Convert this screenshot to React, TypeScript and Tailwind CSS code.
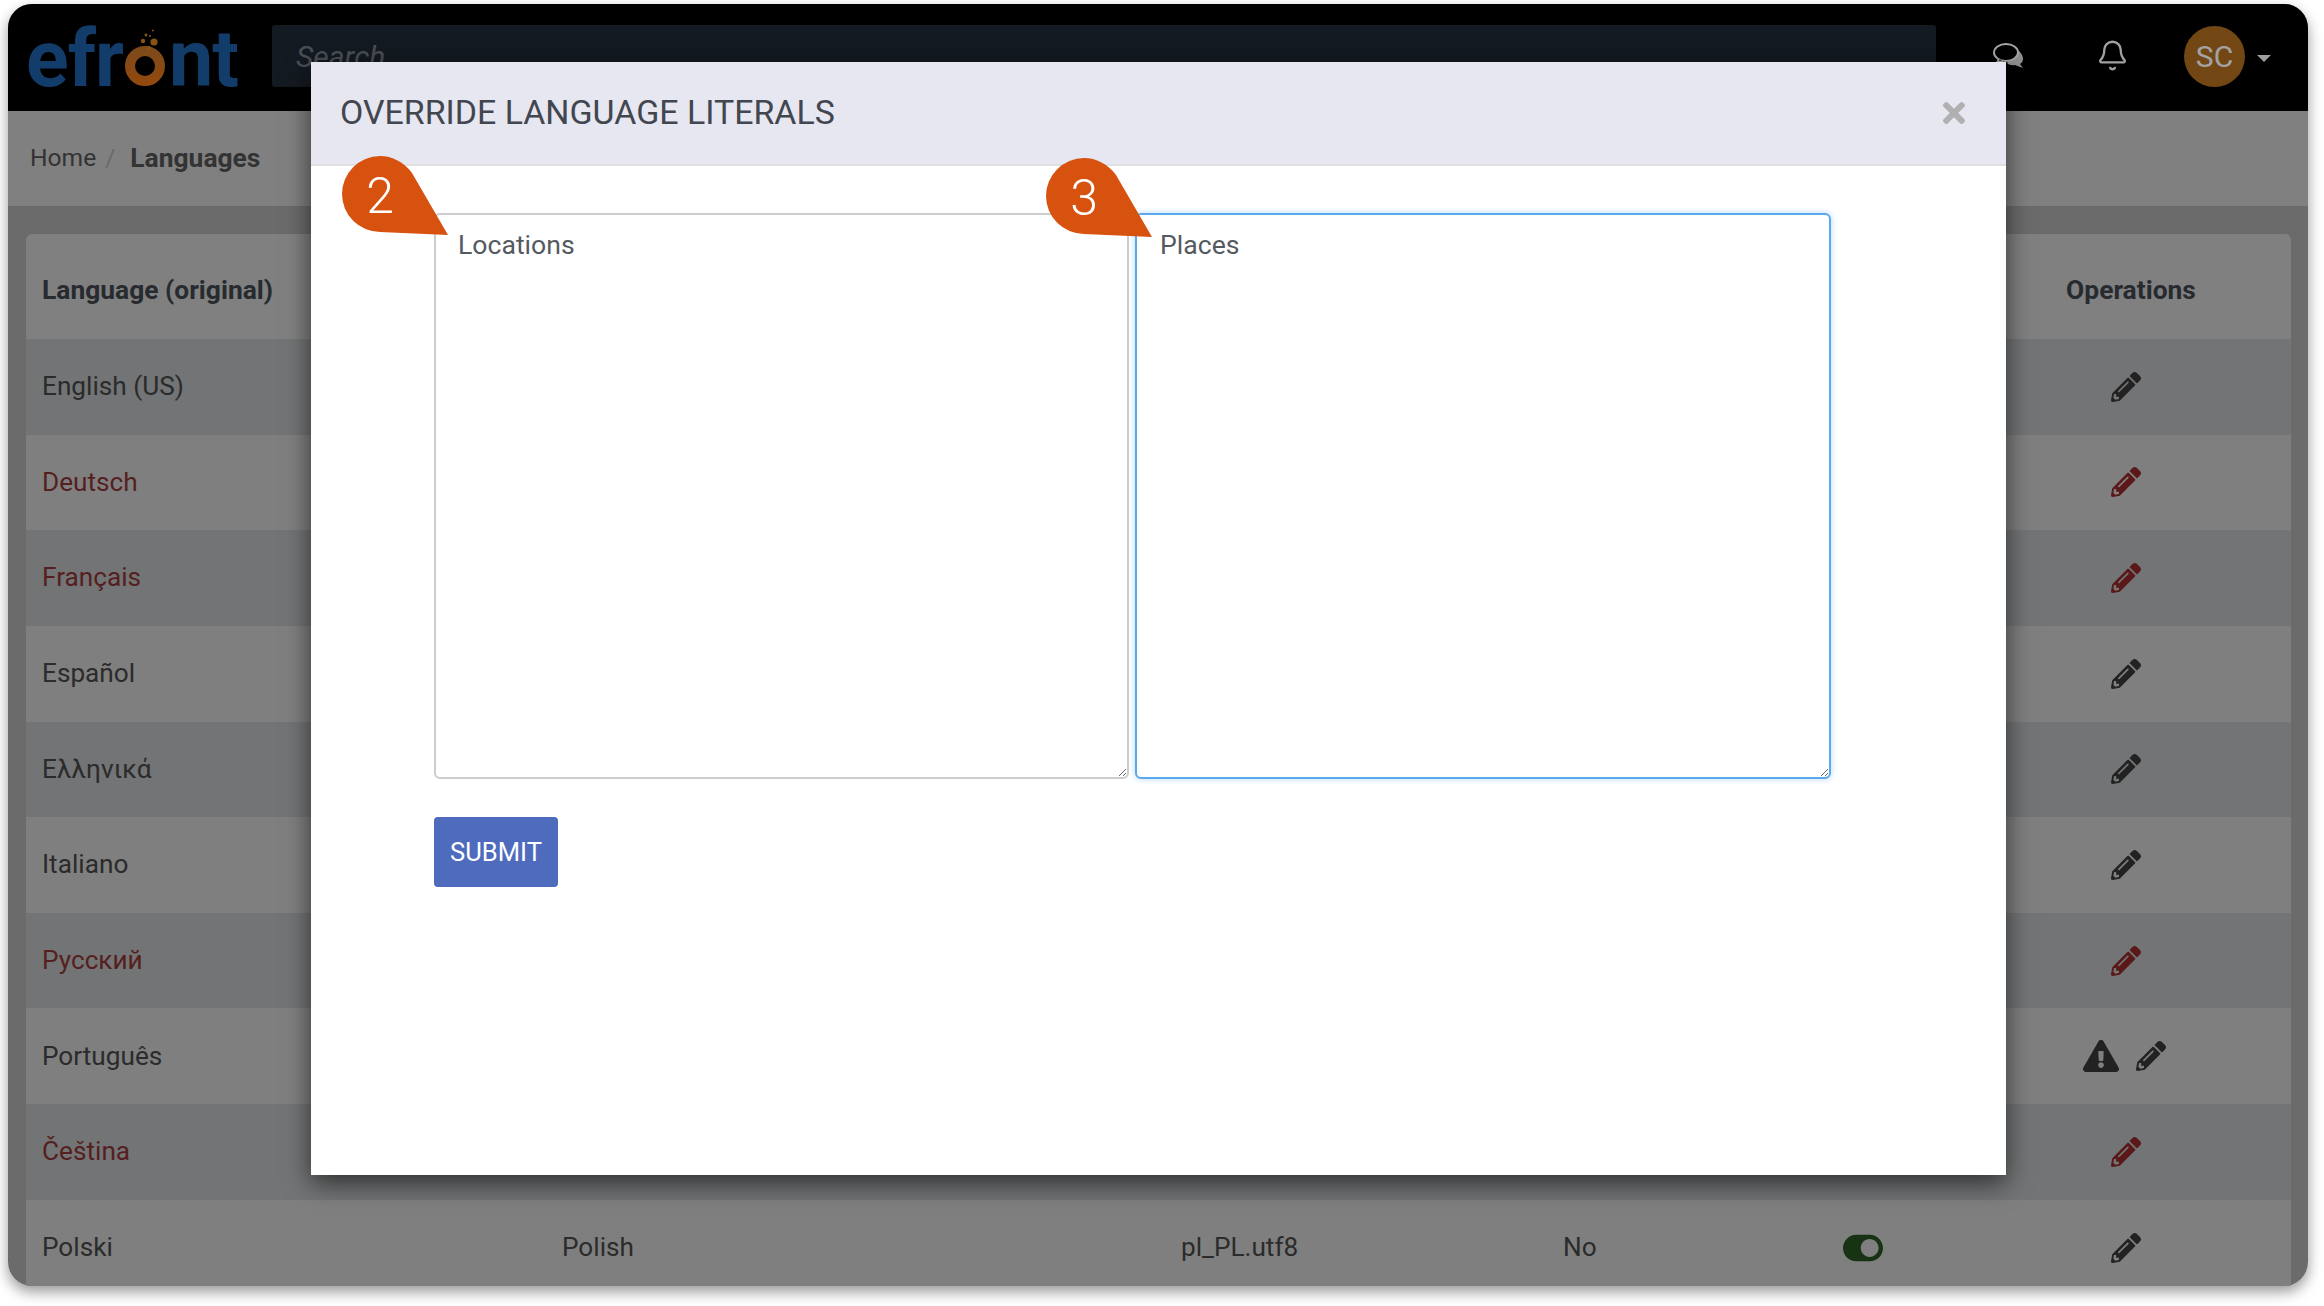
import React from "react";
import { FaPencilAlt, FaExclamationTriangle, FaTimes, FaToggleOn } from "react-icons/fa";
import { Bell } from "lucide-react";

const rows: { name: string; red?: boolean; warn?: boolean }[] = [
  { name: "English (US)" },
  { name: "Deutsch", red: true },
  { name: "Français", red: true },
  { name: "Español" },
  { name: "Ελληνικά" },
  { name: "Italiano" },
  { name: "Русский", red: true },
  { name: "Português", warn: true },
  { name: "Čeština", red: true },
  { name: "Polski" },
];

function Logo() {
  return (
    <div className="flex items-end text-[#123d6b] text-[79px] font-bold tracking-[-1px] w-[214px] h-[60px]">
      <span className="leading-[60px]">efr</span>
      <svg width="46" height="60" viewBox="0 0 46 60" className="shrink-0">
        <defs>
          <linearGradient id="o" x1="0" y1="0" x2="0" y2="1">
            <stop offset="0" stopColor="#7f4a1a" />
            <stop offset="1" stopColor="#91490f" />
          </linearGradient>
        </defs>
        <circle cx="22" cy="37" r="15" fill="none" stroke="url(#o)" strokeWidth="10" />
        <circle cx="31" cy="13" r="3.6" fill="#8a5316" />
        <circle cx="20" cy="12" r="2.2" fill="#8a5316" />
        <circle cx="23" cy="6" r="1.4" fill="#8a5316" />
        <circle cx="27" cy="7" r="1.1" fill="#8a5316" />
        <circle cx="30" cy="1.5" r="1" fill="#8a5316" />
        <circle cx="26" cy="19" r="2" fill="#8a5316" />
      </svg>
      <span className="leading-[60px]">nt</span>
    </div>
  );
}

function Chat() {
  return (
    <svg width="32" height="26" viewBox="0 0 32 26" fill="none">
      <path d="M23 6c4 2 7 6 7 10 0 2-1 4-3 5l3 4-8-3c-3 .5-6 0-8-2z" fill="#8f8f8f" />
      <ellipse cx="13" cy="9.5" rx="12" ry="8.5" stroke="#a6a6a6" strokeWidth="2" fill="#000" />
      <path d="M6 16l-2 4 6-2" stroke="#a6a6a6" strokeWidth="2" fill="#000" />
    </svg>
  );
}

function Callout({ n, className }: { n: string; className: string }) {
  return (
    <div className={`absolute w-[106px] h-[79px] ${className}`}>
      <svg width="106" height="79" viewBox="0 0 106 79" className="absolute left-0 top-0">
        <path d="M38 0C50 0 62 6 70 17L106 79 38 76A38 38 0 1 1 38 0Z" fill="#d7520f" />
      </svg>
      <span className="absolute left-0 top-[2px] w-[76px] h-[76px] flex items-center justify-center text-white text-[50px] font-light leading-none">
        {n}
      </span>
    </div>
  );
}

export default function App() {
  return (
    <div className="w-[2324px] h-[1306px] bg-white pt-[4px] px-[8px] overflow-hidden font-['Roboto',sans-serif]">
      <div className="relative w-[2300px] h-[1282px] rounded-[24px] shadow-[0_6px_14px_rgba(0,0,0,0.4)]">
        <div className="w-full h-full rounded-[24px] overflow-hidden flex flex-col bg-[#6b6b6b]">
          <header className="h-[107px] bg-black flex items-center shrink-0">
            <div className="ml-[18px] mt-[2px]">
              <Logo />
            </div>
            <div className="ml-[32px] w-[1664px] h-[62px] mt-[-3px] bg-[#141a21] rounded-[3px] pl-[24px] flex items-center">
              <span className="italic text-[30px] text-[#4a4f55]">Search</span>
            </div>
            <div className="ml-[57px] mt-[-3px]">
              <Chat />
            </div>
            <Bell className="ml-[71px] mt-[-5px] text-[#a0a0a0]" size={33} strokeWidth={1.7} />
            <div className="ml-[55px] w-[61px] h-[61px] rounded-full bg-[#734714] text-[#a3a3a3] text-[30px] flex items-center justify-center mt-[-2px]">
              SC
            </div>
            <div className="ml-[12px] w-0 h-0 border-x-[7px] border-x-transparent border-t-[7px] border-t-[#a0a0a0] mt-[1px]" />
          </header>

          <nav className="h-[95px] bg-[#808080] flex items-center pl-[22px] text-[24.6px] text-[#333] shrink-0">
            <span>Home</span>
            <span className="ml-[9px] text-[#6a6a6a]">/</span>
            <span className="ml-[15px] font-bold text-[26.4px]">Languages</span>
          </nav>

          <main className="flex-1 min-h-0 pl-[18px] pr-[17px] pt-[28px]">
            <div className="w-[2265px] rounded-t-[6px] overflow-hidden bg-[#808080] text-[26.2px] text-[#2b2b2b]">
              <div className="grid grid-cols-[536px_619px_382px_280px_168px_240px] h-[105px] pt-[8px] items-center font-bold text-[26.4px] text-[#272b2f]">
                <div className="pl-[16px]">Language (original)</div>
                <div />
                <div />
                <div />
                <div />
                <div className="text-center">Operations</div>
              </div>
              {rows.map((r, i) => {
                const last = i === rows.length - 1;
                return (
                  <div
                    key={r.name}
                    className={`grid grid-cols-[536px_619px_382px_280px_168px_240px] h-[95.65px] items-center ${
                      i % 2 === 0 ? "bg-[#727475]" : "bg-[#7f7f7f]"
                    }`}
                  >
                    <div className={`pl-[16px] ${r.red ? "text-[#561f1f]" : ""}`}>{r.name}</div>
                    <div>{last ? "Polish" : ""}</div>
                    <div>{last ? "pl_PL.utf8" : ""}</div>
                    <div>{last ? "No" : ""}</div>
                    <div>{last ? <FaToggleOn size={40} className="text-[#173314]" /> : null}</div>
                    <div
                      className={`flex justify-center items-center gap-[17px] ${r.warn ? "pr-[14px]" : "pr-[10px]"} ${
                        r.red ? "text-[#5a1818]" : "text-[#222]"
                      }`}
                    >
                      {r.warn ? <FaExclamationTriangle size={36} /> : null}
                      <FaPencilAlt size={30} />
                    </div>
                  </div>
                );
              })}
            </div>
          </main>
        </div>

        <div className="absolute left-[303px] top-[58px] w-[1695px] h-[1113px] bg-white shadow-[0_8px_24px_rgba(0,0,0,0.6)]">
          <div className="h-[104px] bg-[#e6e7f1] border-b-2 border-b-[#dfdfdf] flex items-center justify-between pl-[29px] pr-[36px]">
            <h2 className="text-[33.9px] text-[#42464f] font-normal">OVERRIDE LANGUAGE LITERALS</h2>
            <FaTimes size={32} className="text-[#b0b0b0]" />
          </div>
          <div className="pl-[123px] pt-[47px]">
            <div className="flex gap-[6px]">
              <textarea
                readOnly
                defaultValue="Locations"
                className="w-[695px] h-[566px] border-2 border-[#cccccc] rounded-[6px] pl-[22px] pt-[10px] text-[26.6px] text-[#555a60] bg-white outline-none"
              />
              <textarea
                readOnly
                defaultValue="Places"
                className="w-[696px] h-[566px] border-2 border-[#5aa9ee] rounded-[6px] pl-[23px] pt-[10px] text-[26.6px] text-[#555a60] bg-white outline-none shadow-[0_0_6px_rgba(90,169,238,0.45)]"
              />
            </div>
            <button className="mt-[38px] w-[124px] h-[70px] bg-[#4e6bbd] rounded-[4px] text-white text-[25.6px]">
              SUBMIT
            </button>
          </div>
        </div>

        <Callout n="2" className="left-[334px] top-[152px]" />
        <Callout n="3" className="left-[1038px] top-[154px]" />
      </div>
    </div>
  );
}
